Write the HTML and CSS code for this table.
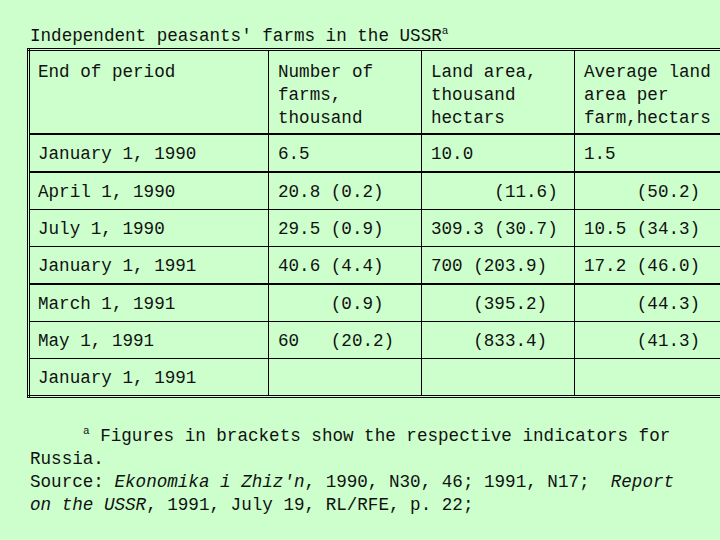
FILE: index.html
```html
<!DOCTYPE html>
<html lang="en">
<head>
    <meta charset="UTF-8">
    <title>Independent peasants' farms in the USSR</title>
    <link rel="stylesheet" href="styles.css">
</head>
<body>
    <div class="page">
        <div class="title">Independent peasants' farms in the USSR<sup class="mark">a</sup></div>
        <table class="farms">
            <colgroup>
                <col class="c-period">
                <col class="c-num">
                <col class="c-num">
                <col class="c-num">
            </colgroup>
            <tr class="head thick">
                <td>End of period</td>
                <td>Number of<br>farms,<br>thousand</td>
                <td>Land area,<br>thousand<br>hectars</td>
                <td>Average land<br>area per<br>farm,hectars</td>
            </tr>
            <tr class="thick">
                <td>January 1, 1990</td>
                <td>6.5</td>
                <td>10.0</td>
                <td>1.5</td>
            </tr>
            <tr>
                <td>April 1, 1990</td>
                <td>20.8 (0.2)</td>
                <td>      (11.6)</td>
                <td>     (50.2)</td>
            </tr>
            <tr>
                <td>July 1, 1990</td>
                <td>29.5 (0.9)</td>
                <td>309.3 (30.7)</td>
                <td>10.5 (34.3)</td>
            </tr>
            <tr class="thick">
                <td>January 1, 1991</td>
                <td>40.6 (4.4)</td>
                <td>700 (203.9)</td>
                <td>17.2 (46.0)</td>
            </tr>
            <tr>
                <td>March 1, 1991</td>
                <td>     (0.9)</td>
                <td>    (395.2)</td>
                <td>     (44.3)</td>
            </tr>
            <tr>
                <td>May 1, 1991</td>
                <td>60   (20.2)</td>
                <td>    (833.4)</td>
                <td>     (41.3)</td>
            </tr>
            <tr>
                <td>January 1, 1991</td>
                <td></td>
                <td></td>
                <td></td>
            </tr>
        </table>
        <div class="notes">
            <span class="indent"></span><sup class="mark">a</sup> Figures in brackets show the respective indicators for<br>
            Russia.<br>
            Source: <i>Ekonomika i Zhiz'n</i>, 1990, N30, 46; 1991, N17;&nbsp; <i>Report</i><br>
            <i>on the USSR</i>, 1991, July 19, RL/RFE, p. 22;
        </div>
    </div>
</body>
</html>
```

FILE: styles.css
```css
html, body { margin: 0; padding: 0; overflow: hidden; }
body { background: #ccffcc; color: #111; font-family: "Liberation Mono", "Courier New", monospace; font-size: 17.6px; line-height: 23px; }
.page { width: 720px; height: 540px; padding: 25px 0 0 27px; box-sizing: border-box; }
.title { padding-left: 3px; white-space: nowrap; }
.mark { font-size: 11px; line-height: 0; vertical-align: 7px; }
.farms { width: 700px; table-layout: fixed; border-collapse: collapse; border: 3px double #000; }
.c-period { width: 240px; }
.c-num { width: 153px; }
.farms td { border: 1px solid #000; padding: 8px 9px 5px 9px; white-space: pre; vertical-align: middle; }
.farms td:first-child { padding-left: 8px; }
.farms .head td { vertical-align: top; height: 70px; padding-top: 10px; padding-bottom: 2px; white-space: normal; }
.farms .thick td { border-bottom: 2px solid #000; }
.notes { margin-top: 27px; padding-left: 3px; white-space: nowrap; }
.notes .indent { display: inline-block; width: 53px; }
```
